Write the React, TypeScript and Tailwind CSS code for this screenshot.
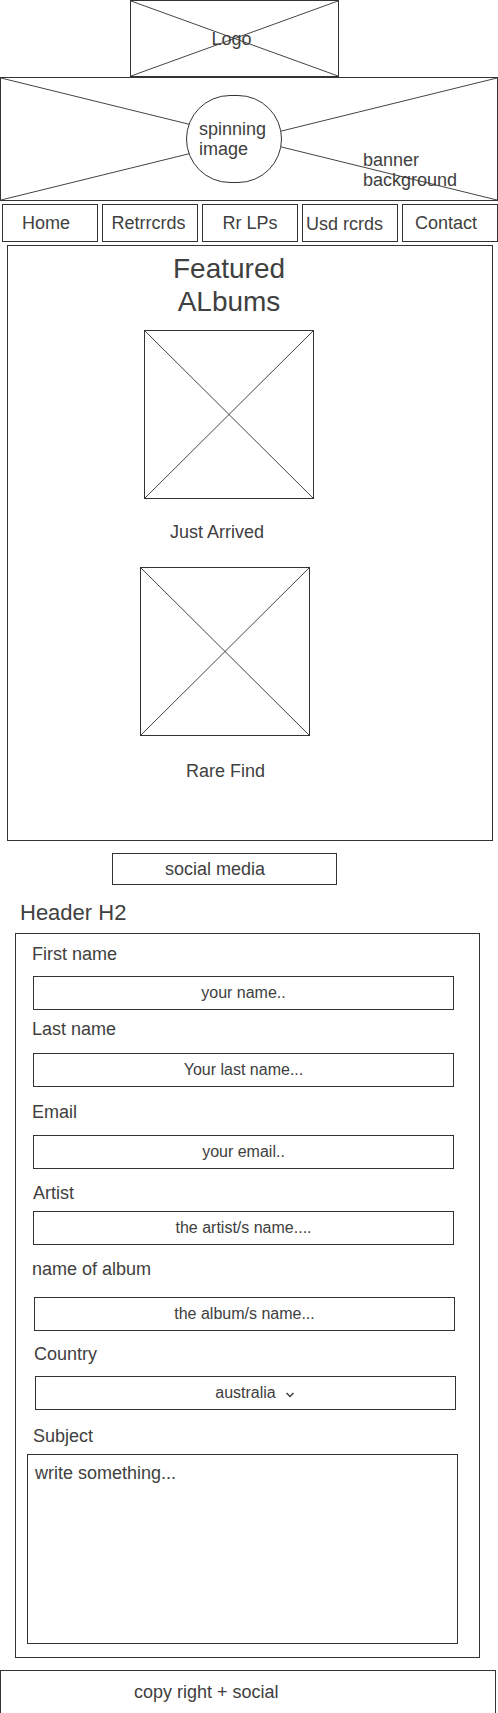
import React from 'react';

const Cross: React.FC = () => (
  <svg className="absolute inset-0 h-full w-full" preserveAspectRatio="none">
    <line x1="0" y1="0" x2="100%" y2="100%" stroke="#444" strokeWidth="1" />
    <line x1="100%" y1="0" x2="0" y2="100%" stroke="#444" strokeWidth="1" />
  </svg>
);

const navItems = [
  { label: 'Home', cls: 'pr-[8px]' },
  { label: 'Retrrcrds', cls: 'pr-[3px]' },
  { label: 'Rr LPs', cls: '' },
  { label: 'Usd rcrds', cls: 'pr-[11px] pt-[1px]' },
  { label: 'Contact', cls: 'pr-[8px]' },
];

const Field: React.FC<{ placeholder: string; className?: string }> = ({ placeholder, className }) => (
  <input
    placeholder={placeholder}
    className={`block h-[34px] w-[421px] border border-[#333] bg-white text-center text-[16px] text-[#404040] outline-none placeholder:text-[#404040] ${className ?? ''}`}
  />
);

const App: React.FC = () => {
  return (
    <div className="h-[1713px] w-[498px] overflow-hidden bg-white font-['Liberation_Sans',Arial,sans-serif] text-[18px] leading-[20px] text-[#404040]">
      {/* Logo */}
      <div className="relative ml-[130px] flex h-[77px] w-[209px] items-center justify-center border border-[#333] pr-[6px]">
        <Cross />
        <span className="relative">Logo</span>
      </div>

      {/* Banner */}
      <div className="relative flex h-[124px] w-[498px] items-start border border-[#333]">
        <Cross />
        <div className="relative ml-[185px] mt-[17px] flex h-[88px] w-[96px] shrink-0 items-center rounded-full border border-[#333] bg-white pl-[12px]">
          <span>
            spinning
            <br />
            image
          </span>
        </div>
        <div className="relative ml-[81px] mt-[72px] whitespace-nowrap">
          banner
          <br />
          background
        </div>
      </div>

      {/* Nav */}
      <nav className="mt-[3px] flex gap-[4px] pl-[2px]">
        {navItems.map((item) => (
          <div
            key={item.label}
            className={`flex h-[38px] w-[96px] items-center justify-center whitespace-nowrap border border-[#333] ${item.cls}`}
          >
            {item.label}
          </div>
        ))}
      </nav>

      {/* Featured albums */}
      <section className="ml-[7px] mt-[3px] h-[596px] w-[486px] border border-[#333] pt-[6px]">
        <h1 className="ml-[136px] w-[170px] text-center text-[28px] leading-[33px]">
          Featured
          <br />
          ALbums
        </h1>
        <div className="relative ml-[136px] mt-[12px] h-[169px] w-[170px] border border-[#333]">
          <Cross />
        </div>
        <p className="ml-[162px] mt-[23px]">Just Arrived</p>
        <div className="relative ml-[132px] mt-[25px] h-[169px] w-[170px] border border-[#333]">
          <Cross />
        </div>
        <p className="ml-[178px] mt-[25px]">Rare Find</p>
      </section>

      {/* Social */}
      <div className="ml-[112px] mt-[12px] flex h-[32px] w-[225px] items-center border border-[#333] pl-[52px]">
        social media
      </div>

      <h2 className="ml-[20px] mt-[15px] text-[22px] leading-[26px]">Header H2</h2>

      {/* Form */}
      <form className="ml-[15px] mt-[7px] h-[725px] w-[465px] border border-[#333] pt-[10px]">
        <label className="ml-[16px] block">First name</label>
        <Field placeholder="your name.." className="ml-[17px] mt-[12px]" />

        <label className="ml-[16px] mt-[9px] block">Last name</label>
        <Field placeholder="Your last name..." className="ml-[17px] mt-[14px]" />

        <label className="ml-[16px] mt-[15px] block">Email</label>
        <Field placeholder="your email.." className="ml-[17px] mt-[13px]" />

        <label className="ml-[17px] mt-[14px] block">Artist</label>
        <Field placeholder="the artist/s name...." className="ml-[17px] mt-[8px]" />

        <label className="ml-[16px] mt-[14px] block">name of album</label>
        <Field placeholder="the album/s name..." className="ml-[18px] mt-[18px]" />

        <label className="ml-[18px] mt-[13px] block">Country</label>
        <div className="ml-[19px] mt-[12px] flex h-[34px] w-[421px] items-center justify-center border border-[#333] text-[16px] leading-[18px]">
          <span className="relative">
            australia
            <svg className="absolute left-full top-[8px] ml-[9px] h-[6px] w-[10px]" viewBox="0 0 10 6">
              <polyline points="1.5,1 5,4.5 8.5,1" fill="none" stroke="#404040" strokeWidth="1.5" />
            </svg>
          </span>
        </div>

        <label className="ml-[17px] mt-[16px] block">Subject</label>
        <textarea
          placeholder="write something..."
          className="ml-[11px] mt-[8px] block h-[190px] w-[431px] resize-none border border-[#333] bg-white pl-[7px] pt-[8px] text-[18px] leading-[20px] text-[#404040] outline-none placeholder:text-[#404040]"
        />
      </form>

      {/* Footer */}
      <footer className="mt-[12px] h-[43px] w-[496px] border-x border-t border-[#333] pl-[133px] pt-[11px]">
        copy right + social
      </footer>
    </div>
  );
};

export default App;
